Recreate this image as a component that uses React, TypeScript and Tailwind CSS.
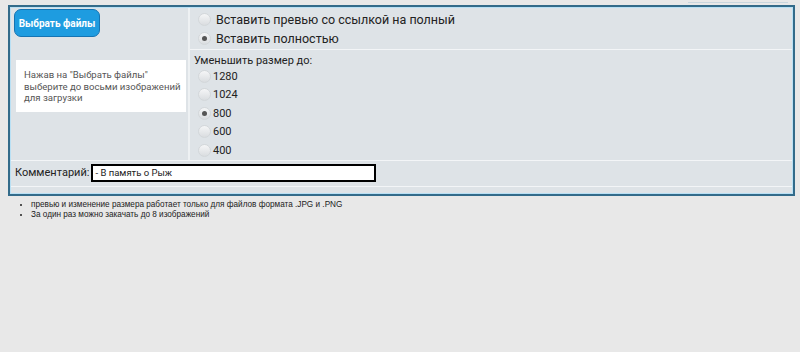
import React from 'react'

function Radio({ checked = false }: { checked?: boolean }) {
  return (
    <span className="relative inline-flex h-[13px] w-[13px] shrink-0 items-center justify-center rounded-full border border-[#d3d7da] bg-gradient-to-b from-[#f5f6f7] to-[#dadde0]">
      {checked && <span className="h-[5px] w-[5px] rounded-full bg-[#555]" />}
    </span>
  )
}

function Option({ label, checked, className = '' }: { label: string; checked?: boolean; className?: string }) {
  return (
    <label className={`flex h-[15px] items-center ${className}`}>
      <Radio checked={checked} />
      <span>{label}</span>
    </label>
  )
}

export default function App() {
  const sizes = ['1280', '1024', '800', '600', '400']
  return (
    <div className="relative h-[352px] w-[800px] overflow-hidden bg-[#e8e8e8] pl-[8px] pt-[5px] text-[#222]" style={{ fontFamily: 'Roboto, "Noto Sans", sans-serif' }}>
      {/* fragment of a link above the box */}
      <div className="absolute right-[12px] top-0 h-[3px] w-[100px] border-b border-[#c9d6de]" />

      <div className="w-[787px] border-2 border-[#336b8a]">
        <div className="border border-[#b9e0f4] bg-[#dee3e7]">
          <div className="flex border-b border-[#f3f5f7]">
            {/* left column */}
            <div className="w-[179px] shrink-0 border-r-2 border-[#eef1f3] pl-[3px] pt-[1px]">
              <button className="flex h-[28px] w-[86px] items-center justify-center rounded-[7px] border border-[#1574b3] bg-[#1e9ce0] text-[10px] font-bold text-white">
                Выбрать файлы
              </button>
              <div className="ml-[2px] mt-[23px] w-[170px] bg-white pb-[8px] pl-[8px] pr-[2px] pt-[9px] text-[9.6px] leading-[11.5px] text-[#555]">
                Нажав на "Выбрать файлы" выберите до восьми изображений для загрузки
              </div>
            </div>
            {/* right column */}
            <div className="flex-1">
              <div className="flex flex-col gap-[4px] border-b border-[#f3f5f7] pb-[3px] pl-[8px] pt-[3.5px] text-[12.5px] leading-[15px]">
                <Option label="Вставить превью со ссылкой на полный" className="gap-[5px]" />
                <Option label="Вставить полностью" checked className="gap-[5px]" />
              </div>
              <div className="pb-[2px] pl-[4px] pt-[3px] text-[11px] leading-[15px]">
                <div>Уменьшить размер до:</div>
                <div className="mt-[1px] flex flex-col gap-[3.5px] pl-[4px]">
                  {sizes.map((s) => (
                    <Option key={s} label={s} checked={s === '800'} className="gap-[2px]" />
                  ))}
                </div>
              </div>
            </div>
          </div>
          <div className="flex h-[26px] items-center border-b border-[#f3f5f7] pl-[4px] text-[11px]">
            <span>Комментарий:</span>
            <div className="ml-[2px] flex h-[18px] w-[285px] items-center border-2 border-black bg-white pl-[2px] text-[9.5px]">
              - В память о Рыж
            </div>
          </div>
          <div className="h-[6px]" />
        </div>
      </div>

      <ul className="mt-[4px] list-disc pl-[23px] text-[8.2px] leading-[10px] text-[#222]" style={{ fontFamily: '"Liberation Sans", Arial, sans-serif' }}>
        <li>превью и изменение размера работает только для файлов формата .JPG и .PNG</li>
        <li>За один раз можно закачать до 8 изображений</li>
      </ul>
    </div>
  )
}
